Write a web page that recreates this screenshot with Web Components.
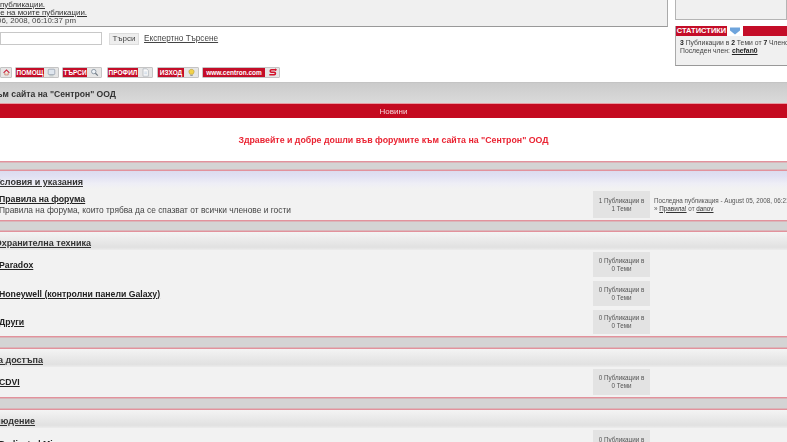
<!DOCTYPE html>
<html lang="bg">
<head>
<meta charset="utf-8">
<title>Форуми</title>
<style>
  html, body { margin: 0; height: 442px; overflow: hidden; background: #fff; }
  body { font-family: "Liberation Sans", Arial, sans-serif; color: #222; }
  forum-page { filter: blur(.45px); }
</style>
</head>
<body>
<forum-page>
  <forum-header></forum-header>
  <forum-path text='Форуми към сайта на "Сентрон" ООД' end="116"></forum-path>
  <forum-news title-text="Новини" text='Здравейте и добре дошли във форумите към сайта на "Сентрон" ООД'></forum-news>
  <forum-strip></forum-strip>
  <forum-category text="Условия и указания" end="83" tint="lavender"></forum-category>
  <forum-row height="31" name="Правила на форума" desc="Правила на форума, които трябва да се спазват от всички членове и гости" posts="1" topics="1" last></forum-row>
  <forum-strip height="12"></forum-strip>
  <forum-category text="Охранителна техника" end="91"></forum-category>
  <forum-row height="29" name="Paradox" posts="0" topics="0"></forum-row>
  <forum-row height="29" name="Honeywell (контролни панели Galaxy)" posts="0" topics="0"></forum-row>
  <forum-row height="28" name="Други" posts="0" topics="0"></forum-row>
  <forum-strip height="13"></forum-strip>
  <forum-category text="Контрол на достъпа" end="43"></forum-category>
  <forum-row height="30" name="CDVI" posts="0" topics="0"></forum-row>
  <forum-strip height="13"></forum-strip>
  <forum-category text="Видеонаблюдение" end="35"></forum-category>
  <forum-row height="31" name="Dedicated Micros" posts="0" topics="0"></forum-row>
</forum-page>

<script>
(() => {
  const define = (name, css, render) => {
    customElements.define(name, class extends HTMLElement {
      connectedCallback() {
        if (this.shadowRoot) return;
        this.attachShadow({ mode: 'open' });
        this.shadowRoot.innerHTML = `<style>${css}</style>${render(this)}`;
      }
    });
  };

  const ICONS = {
    home: '<path d="M1 6 5.5 1.5 10 6" fill="none" stroke="#c8102e" stroke-width="1.6"/><path d="M2.8 6v3.4h5.4V6" fill="#f6e2c8" stroke="#a33" stroke-width=".7"/>',
    help: '<rect x="1.5" y="1.5" width="8" height="6.5" rx="1" fill="#dfe6ee" stroke="#8a97a6" stroke-width=".8"/><path d="M3 9.5h5" stroke="#9aa" stroke-width=".8"/>',
    search: '<circle cx="4.6" cy="4.4" r="2.7" fill="#eef3f8" stroke="#7d8b99" stroke-width="1"/><path d="m6.6 6.4 3 3" stroke="#6d7781" stroke-width="1.4"/>',
    profile: '<path d="M2.5 1h4.4L9 3.2V10H2.5z" fill="#fafafa" stroke="#9aa3ad" stroke-width=".7"/><path d="M4 5h3.4M4 7h3.4" stroke="#a8c0d8" stroke-width=".7"/>',
    exit: '<path d="M5.5 1.6c2 0 3.2 1.3 3.2 3 0 1.3-1 2-1.3 3H3.6c-.3-1-1.3-1.7-1.3-3 0-1.7 1.2-3 3.2-3z" fill="#f2d24a" stroke="#a98f2c" stroke-width=".6"/><path d="M4 9h3" stroke="#777" stroke-width="1"/>',
    arrow: '<path d="M10 2.2H4.2a1.5 1.5 0 0 0 0 3h3.4a1.5 1.5 0 0 1 0 3H1.6" fill="none" stroke="#d3132c" stroke-width="1.9"/><path d="m8.6.4 2.4 1.8-2.4 1.8z" fill="#d3132c"/>',
  };

  define('forum-page', `
    :host { display: flex; flex-direction: column; width: 787px; height: 442px; overflow: hidden; }
  `, () => '<slot></slot>');

  define('nav-button', `
    :host { display: inline-flex; align-items: stretch; height: 11px; box-sizing: border-box; border: 1px solid #c4c4c4; border-radius: 1px; background: #e6e6e6; }
    b { display: flex; align-items: center; justify-content: center; flex: 1; background: #c40d28; color: #fff; font: bold 6.5px/9px "Liberation Sans", Arial, sans-serif; white-space: nowrap; }
    b:empty { background: none; flex: 0; }
    svg { width: 11px; height: 9px; margin: 0 1px 0 2px; }
  `, (el) => `
    <b>${el.getAttribute('text')}</b>
    <svg viewBox="0 0 11 11">${ICONS[el.getAttribute('icon')]}</svg>
  `);

  define('forum-header', `
    :host { display: grid; grid-template-columns: 668px 112px; column-gap: 7px; height: 82px; flex: none; font-size: 7px; color: #444; }
    .left { display: flex; flex-direction: column; min-width: 0; }
    .info { height: 27px; box-sizing: border-box; background: #f0f0f0; border-right: 1px solid #aaa; border-bottom: 1px solid #999; padding-top: 1px; display: flex; flex-direction: column; font-size: 7.9px; line-height: 8px; }
    .info a { color: #333; text-decoration: underline; }
    .line { display: flex; justify-content: flex-end; white-space: nowrap; }
    .search { display: flex; align-items: center; margin-top: 5px; height: 13px; }
    .field { width: 102px; height: 13px; box-sizing: border-box; border: 1px solid #c8c8c8; background: #fff; flex: none; }
    .go { margin-left: 7px; width: 30px; height: 12px; box-sizing: border-box; background: #eee; border: 1px solid #ddd; text-align: center; font: 8px/10px "Liberation Sans", Arial, sans-serif; color: #444; }
    .adv { margin-left: 5px; font-size: 8.2px; color: #444; text-decoration: underline; white-space: nowrap; }
    nav { display: flex; align-items: center; margin-top: 22px; gap: 3px; }
    .right { display: flex; flex-direction: column; }
    .box { height: 20px; box-sizing: border-box; background: #f0f0f0; border: 1px solid #b4b4b4; border-top: 0; }
    .stats { margin-top: 6px; height: 40px; box-sizing: border-box; background: #f0f0f0; border-left: 1px solid #aaa; border-bottom: 1px solid #999; }
    .head { display: flex; height: 10px; align-items: stretch; background: #fff; }
    .head b { background: #c40d28; color: #fff; font-size: 7.5px; line-height: 10px; width: 51px; text-align: center; }
    .head svg { width: 12px; height: 9px; margin: 0 2px; }
    .head i { flex: 1; background: #c40d28; }
    .body { font-size: 6.8px; line-height: 8px; padding: 3px 0 0 4px; white-space: nowrap; color: #444; }
    .body strong { color: #222; }
    .body u { font-weight: bold; color: #222; }
  `, () => `
    <div class="left">
      <div class="info">
        <div class="line" style="width:45px"><a>Виж всички непрочетени публикации.</a></div>
        <div class="line" style="width:87px"><a>Виж отговорите на моите публикации.</a></div>
        <div class="line" style="width:76px"><span>August 06, 2008, 06:10:37 pm</span></div>
      </div>
      <div class="search">
        <div class="field"></div>
        <div class="go">Търси</div>
        <span class="adv">Експертно Търсене</span>
      </div>
      <nav>
        <nav-button text="" icon="home" style="width:12px"></nav-button>
        <nav-button text="ПОМОЩ" icon="help" style="width:44px"></nav-button>
        <nav-button text="ТЪРСИ" icon="search" style="width:40px"></nav-button>
        <nav-button text="ПРОФИЛ" icon="profile" style="width:46px;margin-left:2px"></nav-button>
        <nav-button text="ИЗХОД" icon="exit" style="width:42px;margin-left:1px"></nav-button>
        <nav-button text="www.centron.com" icon="arrow" style="width:78px"></nav-button>
      </nav>
    </div>
    <div class="right">
      <div class="box"></div>
      <div class="stats">
        <div class="head">
          <b>СТАТИСТИКИ</b>
          <svg viewBox="0 0 12 9"><path d="M1 1.5h10v3L6 8.5 1 4.5z" fill="#6ea4dc"/></svg>
          <i></i>
        </div>
        <div class="body">
          <strong>3</strong> Публикации в <strong>2</strong> Теми от <strong>7</strong> Членове<br>
          Последен член: <u>chefan0</u>
        </div>
      </div>
    </div>
  `);

  define('forum-path', `
    :host { display: flex; height: 22px; flex: none; box-sizing: border-box; background: linear-gradient(#cbcbcb, #dadada); border-top: 1px solid #c4c4c4; border-bottom: 1px solid #e79aa2; font: bold 8.6px/22px "Liberation Sans", Arial, sans-serif; color: #333; white-space: nowrap; }
    .clip { display: flex; justify-content: flex-end; flex: none; }
  `, (el) => `<div class="clip" style="width:${el.getAttribute('end')}px"><span>${el.getAttribute('text')}</span></div>`);

  define('forum-news', `
    :host { display: flex; flex-direction: column; height: 57px; flex: none; background: #fff; }
    .title { height: 14px; background: #c40a20; color: #f4d4d8; text-align: center; font-size: 8px; line-height: 16px; overflow: hidden; }
    .text { flex: 1; display: flex; align-items: center; justify-content: center; color: #ea2433; font: bold 8.8px "Liberation Sans", Arial, sans-serif; padding-top: 1px; }
  `, (el) => `
    <div class="title">${el.getAttribute('title-text')}</div>
    <div class="text">${el.getAttribute('text')}</div>
  `);

  define('forum-strip', `
    :host { display: block; flex: none; box-sizing: border-box; background: #d4d4d4; border-top: 1px solid #e2929c; border-bottom: 1px solid #e2929c; box-shadow: inset 0 1px 0 #d9b6ba, inset 0 -1px 0 #d9b6ba; }
  `, (el) => {
    el.style.height = `${el.getAttribute('height') || 10}px`;
    return '';
  });

  define('forum-category', `
    :host { display: flex; height: 18px; flex: none; overflow: hidden; background: linear-gradient(#f4f4f4, #e1e1e1 85%, #ececec); font: bold 9px/22px "Liberation Sans", Arial, sans-serif; color: #333; white-space: nowrap; }
    :host([tint="lavender"]) { background: linear-gradient(#dcdcee, #e0e0f2 25%, #eeeef6 70%, #f2f2f2); }
    .clip { display: flex; justify-content: flex-end; flex: none; }
    u { text-decoration-thickness: 1px; }
  `, (el) => `
    <div class="clip" style="width:${el.getAttribute('end')}px"><u>${el.getAttribute('text')}</u></div>
  `);

  define('forum-row', `
    :host { display: grid; grid-template-columns: 593px 57px 1fr; flex: none; background: #f2f2f2; color: #333; font-size: 6.3px; white-space: nowrap; overflow: hidden; }
    .main { display: flex; flex-direction: column; justify-content: center; min-width: 0; padding-top: 1px; margin-left: -1px; }
    .name { font: bold 8.7px/11px "Liberation Sans", Arial, sans-serif; color: #222; text-decoration: underline; }
    .desc { font-size: 8.4px; line-height: 11px; color: #444; }
    .stats { margin: 2px 0; background: #e3e3e3; display: flex; flex-direction: column; align-items: center; justify-content: center; line-height: 8px; color: #555; }
    .last { padding-left: 4px; display: flex; flex-direction: column; justify-content: center; line-height: 8px; color: #555; }
    .last u { color: #333; }
  `, (el) => {
    el.style.height = `${el.getAttribute('height')}px`;
    const desc = el.getAttribute('desc');
    const last = el.hasAttribute('last')
      ? `<span>Последна публикация - August 05, 2008, 06:21:14 pm</span><span>» <u>Правила!</u> от <u>danov</u></span>`
      : '';
    return `
      <div class="main">
        <span class="name">${el.getAttribute('name')}</span>
        ${desc ? `<span class="desc">${desc}</span>` : ''}
      </div>
      <div class="stats">
        <span>${el.getAttribute('posts')} Публикации в</span>
        <span>${el.getAttribute('topics')} Теми</span>
      </div>
      <div class="last">${last}</div>
    `;
  });
})();
</script>
</body>
</html>
